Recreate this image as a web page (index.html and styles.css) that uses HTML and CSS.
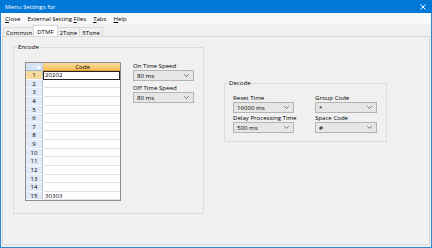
FILE: index.html
```html
<!DOCTYPE html>
<html lang="en">
<head>
  <meta charset="UTF-8" />
  <title>Menu Settings for</title>
  <link rel="stylesheet" href="styles.css">
</head>
<body>
  <div class="window">
    <div class="titlebar">
      <span>Menu Settings for</span>
      <svg class="close" width="6" height="6" viewBox="0 0 6 6"><path d="M0.5 0.5L5.5 5.5M5.5 0.5L0.5 5.5" stroke="#fff" stroke-width="1"/></svg>
    </div>

    <div class="frame">
      <div class="menubar">
        <span><u>C</u>lose</span>
        <span>External Setting <u>F</u>iles</span>
        <span><u>T</u>abs</span>
        <span><u>H</u>elp</span>
      </div>

      <div class="tabs">
        <span class="tab">Common</span>
        <span class="tab active">DTMF</span>
        <span class="tab">2Tone</span>
        <span class="tab">5Tone</span>
      </div>

      <div class="page">
        <div class="group encode">
          <span class="legend">Encode</span>
          <div class="encode-body">
            <div class="grid">
              <div class="grid-row head">
                <div class="rh corner"><span class="corner-mark"></span></div>
                <div class="cell">Code</div>
              </div>
              <div class="grid-row current"><div class="rh">1</div><div class="cell focus">20202</div></div>
              <div class="grid-row"><div class="rh">2</div><div class="cell"></div></div>
              <div class="grid-row"><div class="rh">3</div><div class="cell"></div></div>
              <div class="grid-row"><div class="rh">4</div><div class="cell"></div></div>
              <div class="grid-row"><div class="rh">5</div><div class="cell"></div></div>
              <div class="grid-row"><div class="rh">6</div><div class="cell"></div></div>
              <div class="grid-row"><div class="rh">7</div><div class="cell"></div></div>
              <div class="grid-row"><div class="rh">8</div><div class="cell"></div></div>
              <div class="grid-row"><div class="rh">9</div><div class="cell"></div></div>
              <div class="grid-row"><div class="rh">10</div><div class="cell"></div></div>
              <div class="grid-row"><div class="rh">11</div><div class="cell"></div></div>
              <div class="grid-row"><div class="rh">12</div><div class="cell"></div></div>
              <div class="grid-row"><div class="rh">13</div><div class="cell"></div></div>
              <div class="grid-row"><div class="rh">14</div><div class="cell"></div></div>
              <div class="grid-row"><div class="rh">15</div><div class="cell">30303</div></div>
            </div>

            <div class="speeds">
              <label>On Time Speed</label>
              <div class="combo">80 ms<svg class="chev" width="5" height="3" viewBox="0 0 5 3"><path d="M0.3 0.3L2.5 2.5L4.7 0.3" fill="none" stroke="#555" stroke-width="0.8"/></svg></div>
              <label class="second">Off Time Speed</label>
              <div class="combo">80 ms<svg class="chev" width="5" height="3" viewBox="0 0 5 3"><path d="M0.3 0.3L2.5 2.5L4.7 0.3" fill="none" stroke="#555" stroke-width="0.8"/></svg></div>
            </div>
          </div>
        </div>

        <div class="group decode">
          <span class="legend">Decode</span>
          <div class="decode-body">
            <div class="field">
              <label>Reset Time</label>
              <div class="combo">16000 ms<svg class="chev" width="5" height="3" viewBox="0 0 5 3"><path d="M0.3 0.3L2.5 2.5L4.7 0.3" fill="none" stroke="#555" stroke-width="0.8"/></svg></div>
            </div>
            <div class="field">
              <label>Group Code</label>
              <div class="combo">*<svg class="chev" width="5" height="3" viewBox="0 0 5 3"><path d="M0.3 0.3L2.5 2.5L4.7 0.3" fill="none" stroke="#555" stroke-width="0.8"/></svg></div>
            </div>
            <div class="field">
              <label>Delay Processing Time</label>
              <div class="combo">500 ms<svg class="chev" width="5" height="3" viewBox="0 0 5 3"><path d="M0.3 0.3L2.5 2.5L4.7 0.3" fill="none" stroke="#555" stroke-width="0.8"/></svg></div>
            </div>
            <div class="field">
              <label>Space Code</label>
              <div class="combo">#<svg class="chev" width="5" height="3" viewBox="0 0 5 3"><path d="M0.3 0.3L2.5 2.5L4.7 0.3" fill="none" stroke="#555" stroke-width="0.8"/></svg></div>
            </div>
          </div>
        </div>
      </div>
    </div>
  </div>
</body>
</html>
```

FILE: styles.css
```css
* {
  box-sizing: border-box;
}

body {
  margin: 0;
  font-family: "Open Sans", "Liberation Sans", Arial, sans-serif;
  font-size: 6.1px;
  color: #000;
  background: #f0f0f0;
  white-space: nowrap;
}

.window {
  width: 432px;
  height: 248px;
  display: flex;
  flex-direction: column;
}

.titlebar {
  height: 13px;
  background: #0078d7;
  color: #fff;
  display: flex;
  align-items: center;
  justify-content: space-between;
  padding: 0 6px 0 5px;
}

.close {
  display: block;
}

.frame {
  flex: 1;
  display: flex;
  flex-direction: column;
  border: 1px solid #2b88d8;
  border-top: none;
  background: #f0f0f0;
}

.menubar {
  height: 11px;
  line-height: 11px;
  background: #f9f9f9;
  display: flex;
  gap: 7px;
  padding-left: 4px;
}

.tabs {
  height: 12px;
  display: flex;
  align-items: flex-end;
  padding-left: 2px;
}

.tab {
  height: 9px;
  line-height: 9px;
  padding: 0 2px;
  border: 1px solid #d9d9d9;
  border-bottom: none;
  margin-right: -1px;
  background: #f0f0f0;
}

.tab.active {
  height: 11px;
  line-height: 11px;
  background: #fff;
  margin: 0 -1px 0 -1px;
  padding: 0 3px;
  position: relative;
}

.page {
  flex: 1;
  margin: 0 1px 2px 1px;
  border: 1px solid #d9d9d9;
  display: flex;
  align-items: flex-start;
  padding: 10px 0 0 10px;
}

/* group boxes */
.group {
  position: relative;
  border: 1px solid #dcdcdc;
}

.legend {
  position: absolute;
  top: -5px;
  left: 3px;
  padding: 0 1px;
  line-height: 8px;
  background: #f0f0f0;
}

.encode {
  width: 191px;
  height: 167px;
}

.encode-body {
  display: flex;
  align-items: flex-start;
  padding: 13px 0 0 11px;
}

.decode {
  width: 163px;
  height: 59px;
  margin: 36px 0 0 20px;
}

.decode-body {
  display: grid;
  grid-template-columns: 61px 62px;
  column-gap: 21px;
  padding: 9px 0 0 8px;
}

label {
  display: block;
  line-height: 9px;
}

.speeds {
  width: 61px;
  margin-left: 12px;
}

.speeds .second {
  margin-top: 2px;
}

.combo {
  height: 11px;
  line-height: 9px;
  border: 1px solid #b4b4b4;
  background: #e6e6e6;
  padding-left: 3px;
  display: flex;
  align-items: center;
  justify-content: space-between;
  padding-right: 4px;
}

.chev {
  display: block;
}

/* grid */
.grid {
  width: 96px;
  margin-top: 1px;
  border: 1px solid #8e8e8e;
  background: #fff;
}

.grid-row {
  display: flex;
  height: 8.64px;
}

.grid-row.head {
  height: 8px;
}

.rh {
  width: 17px;
  flex: none;
  text-align: center;
  line-height: 8px;
  background: #e1eaf6;
  border-right: 1px solid #b9c9de;
  border-bottom: 1px solid #f5f8fc;
}

.cell {
  flex: 1;
  line-height: 8px;
  padding-left: 2px;
  border-bottom: 1px solid #e3e3e3;
}

.head .cell {
  text-align: center;
  background: linear-gradient(#fbdc9a, #f5bf5e);
  border-bottom: 1px solid #e59a2c;
}

.corner {
  position: relative;
  background: #d6e3f3;
  border-bottom: 1px solid #9fb6d3;
}

.corner-mark {
  position: absolute;
  right: 2px;
  bottom: 1px;
  width: 0;
  height: 0;
  border-left: 4px solid transparent;
  border-bottom: 4px solid #fff;
}

.current .rh {
  background: #f8d99c;
}

.cell.focus {
  border: 1px solid #222;
  line-height: 6px;
  padding-left: 1px;
}
```
